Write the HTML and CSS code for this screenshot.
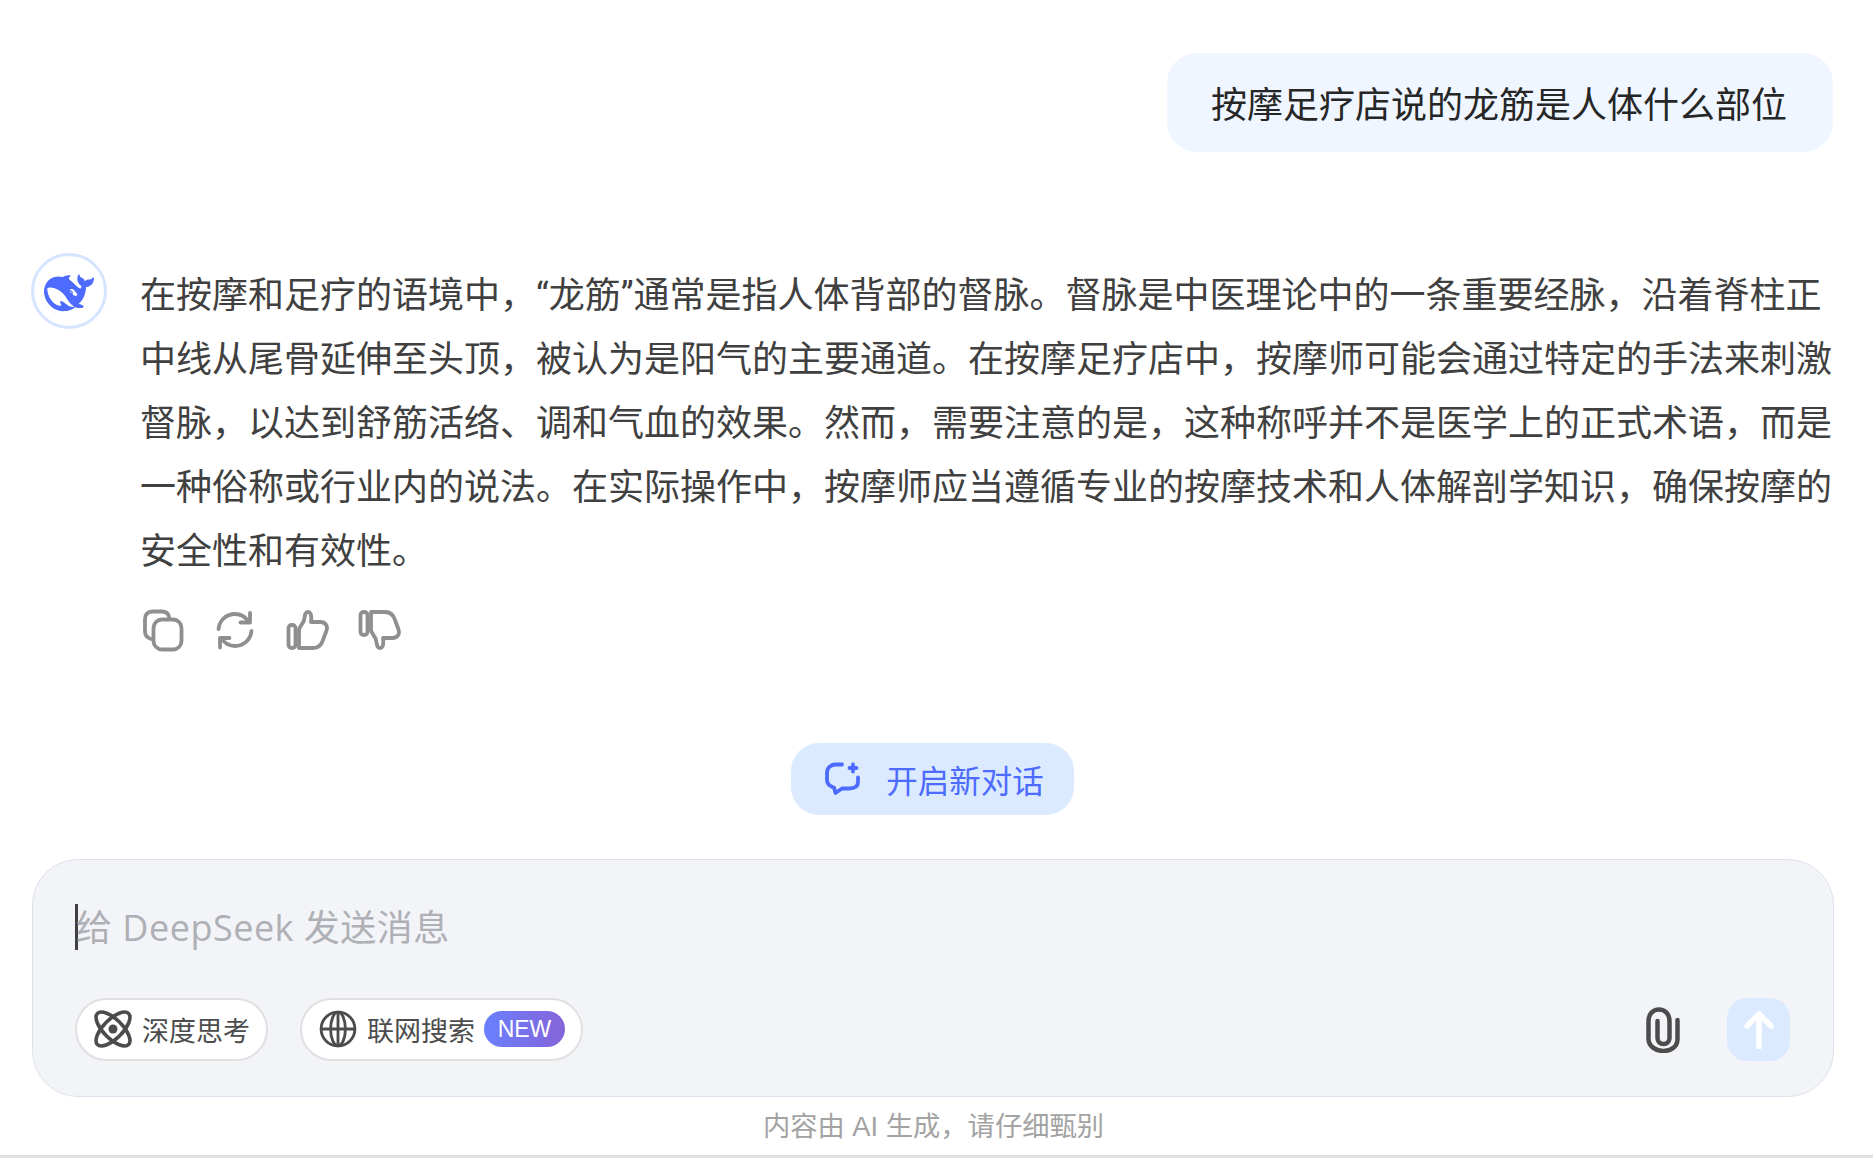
FILE: index.html
```html
<!DOCTYPE html>
<html lang="zh-CN">
<head>
<meta charset="utf-8">
<title>DeepSeek</title>
<link rel="stylesheet" href="styles.css">
</head>
<body>
<main class="page">
  <section class="chat">
    <div class="user-row">
      <div class="bubble">按摩足疗店说的龙筋是人体什么部位</div>
    </div>
    <div class="answer">
      <div class="avatar">
        <svg class="whale" viewBox="0 -1 24 24"><path fill="#4d6bfe" d="M23.748 4.482c-.254-.124-.364.113-.512.234-.051.039-.094.09-.137.136-.372.397-.806.657-1.373.626-.829-.046-1.537.214-2.163.848-.133-.782-.575-1.248-1.247-1.548-.352-.156-.708-.311-.955-.65-.172-.241-.219-.51-.305-.774-.055-.16-.11-.323-.293-.35-.2-.031-.278.136-.356.276-.313.572-.434 1.202-.422 1.84.027 1.436.633 2.58 1.838 3.393.137.093.172.187.129.323-.082.28-.18.552-.266.833-.055.179-.137.217-.329.14a5.526 5.526 0 01-1.736-1.18c-.857-.828-1.631-1.742-2.597-2.458a11.365 11.365 0 00-.689-.471c-.985-.957.13-1.743.388-1.836.27-.098.093-.432-.779-.428-.872.004-1.67.295-2.687.684a3.055 3.055 0 01-.465.137 9.597 9.597 0 00-2.883-.102c-1.885.21-3.39 1.102-4.497 2.623C.082 8.606-.231 10.684.152 12.85c.403 2.284 1.569 4.175 3.36 5.653 1.858 1.533 3.997 2.284 6.438 2.14 1.482-.085 3.133-.284 4.994-1.86.47.234.962.327 1.78.397.63.059 1.236-.03 1.705-.128.735-.156.684-.837.419-.961-2.155-1.004-1.682-.595-2.113-.926 1.096-1.296 2.746-2.642 3.392-7.003.05-.347.007-.565 0-.845-.004-.17.035-.237.23-.256a4.173 4.173 0 001.545-.475c1.396-.763 1.96-2.015 2.093-3.517.02-.23-.004-.467-.247-.588zM11.581 18c-2.089-1.642-3.102-2.183-3.52-2.16-.392.024-.321.471-.235.763.09.288.207.486.371.739.114.167.192.416-.113.603-.673.416-1.842-.14-1.897-.167-1.361-.802-2.5-1.86-3.301-3.307-.774-1.393-1.224-2.887-1.298-4.482-.02-.386.093-.522.477-.592a4.696 4.696 0 011.529-.039c2.132.312 3.946 1.265 5.468 2.774.868.86 1.525 1.887 2.202 2.891.72 1.066 1.494 2.082 2.48 2.914.348.292.625.514.891.677-.802.09-2.14.11-3.054-.614zm1-6.44a.306.306 0 01.415-.287.302.302 0 01.2.288.306.306 0 01-.31.307.303.303 0 01-.304-.308zm3.11 1.596c-.2.081-.399.151-.59.16a1.245 1.245 0 01-.798-.254c-.274-.23-.47-.358-.552-.758a1.73 1.73 0 01.016-.588c.07-.327-.008-.537-.239-.727-.187-.156-.426-.199-.688-.199a.559.559 0 01-.254-.078c-.11-.054-.2-.19-.114-.358.028-.054.16-.186.192-.21.356-.202.767-.136 1.146.016.352.144.618.408 1.001.782.391.451.462.576.685.914.176.265.336.537.445.848.067.195-.019.354-.25.452z"/></svg>
      </div>
      <div class="answer-body">
        <p class="answer-text">在按摩和足疗的语境中，“龙筋”通常是指人体背部的督脉。督脉是中医理论中的一条重要经脉，沿着脊柱正中线从尾骨延伸至头顶，被认为是阳气的主要通道。在按摩足疗店中，按摩师可能会通过特定的手法来刺激督脉，以达到舒筋活络、调和气血的效果。然而，需要注意的是，这种称呼并不是医学上的正式术语，而是一种俗称或行业内的说法。在实际操作中，按摩师应当遵循专业的按摩技术和人体解剖学知识，确保按摩的安全性和有效性。</p>
        <div class="actions">
          <svg class="act" viewBox="0 0 44 44"><path d="M10 31C6.500 30 4 27.500 4 23.500V11C4 6.500 6.500 3.500 11.500 3.500H21c3.600 0 6 1.700 7 5"/><rect x="12.500" y="11.500" width="28" height="30" rx="8.500"/></svg>
          <svg class="act" viewBox="0 0 44 44"><path d="M5.500 21C6.500 12 13.500 6 22 6c5.500 0 10 2.400 13 7"/><path d="M37 5v9.500h-9.500"/><path d="M38.500 23C37.500 32 30.500 38 22 38c-5.500 0-10-2.400-13-7"/><path d="M7 39.500V30h9.500"/></svg>
          <svg class="act" viewBox="0 0 44 44"><rect x="3.500" y="17" width="7" height="23" rx="3.200"/><path d="M14 21 18.500 13.500C19.500 11 19.500 8 20.500 5.500 21.500 3.500 24.500 3.500 25.500 5.500 26.500 8 26.500 11 26 14H35.500C40.500 14 43 18 41.500 22.500L38 32C36.500 37 33 40 28 40H14Z"/></svg>
          <svg class="act" viewBox="0 0 44 44"><g transform="matrix(1 0 0 -1 0 44)"><rect x="3.500" y="17" width="7" height="23" rx="3.200"/><path d="M14 21 18.500 13.500C19.500 11 19.500 8 20.500 5.500 21.500 3.500 24.500 3.500 25.500 5.500 26.500 8 26.500 11 26 14H35.500C40.500 14 43 18 41.500 22.500L38 32C36.500 37 33 40 28 40H14Z"/></g></svg>
        </div>
      </div>
    </div>
  </section>
  <div class="new-row">
    <button class="new-chat">
      <svg class="new-icon" viewBox="0 0 42 42"><path d="M20 6.500H14C8.500 6.500 5 10 5 15V22C5 26 7 28 12 29.500L13.500 35 20 30.500H27C33 30.500 36 28 36 24V19.500"/><path d="M31 6.500V13.500M27.500 10H34.500"/></svg>
      <span>开启新对话</span>
    </button>
  </div>
  <section class="composer">
    <div class="input-line"><span class="caret"></span><span class="placeholder">给 DeepSeek 发送消息</span></div>
    <div class="tools">
      <div class="tool-left">
        <div class="pill">
          <svg class="pill-icon" viewBox="0 0 38 38"><g fill="none" stroke="#4c4c4c" stroke-width="3.600"><ellipse cx="19" cy="19" rx="22" ry="9.500" transform="rotate(45 19 19)"/><ellipse cx="19" cy="19" rx="22" ry="9.500" transform="rotate(-45 19 19)"/></g><circle cx="19" cy="19" r="4.500" fill="#4c4c4c"/></svg>
          <span>深度思考</span>
        </div>
        <div class="pill">
          <svg class="pill-icon" viewBox="0 0 36 36"><g fill="none" stroke="#4c4c4c" stroke-width="2.700"><circle cx="18" cy="18" r="16"/><ellipse cx="18" cy="18" rx="7" ry="16"/><path d="M2 18h32"/><path d="M18 2v32"/></g></svg>
          <span>联网搜索</span>
          <span class="badge">NEW</span>
        </div>
      </div>
      <div class="tool-right">
        <svg class="clip" viewBox="0 0 34 46"><path d="M31.500 13v19c0 7.500-6 12-14 12S2.500 39 2.500 32V14C2.500 7 7 2.500 13 2.500S23.500 7 23.500 14v17c0 3.500-2.500 6-6 6s-6-2.500-6-6V14"/></svg>
        <div class="send">
          <svg class="send-icon" viewBox="0 0 32 38"><path d="M16 36V4M4 15 16 3l12 12"/></svg>
        </div>
      </div>
    </div>
  </section>
  <p class="notice">内容由 AI 生成，请仔细甄别</p>
</main>
</body>
</html>
```
FILE: styles.css
```css
html, body { margin: 0; padding: 0; background: #fff; }
body {
  width: 1873px;
  height: 1158px;
  overflow: hidden;
  font-family: "Liberation Sans", "Noto Sans CJK SC", sans-serif;
  color: #404040;
}
.page {
  box-sizing: border-box;
  height: 1158px;
  padding: 53px 38px 0 32px;
  border-bottom: 3px solid #e2e2e2;
  display: flex;
  flex-direction: column;
}
.user-row { display: flex; justify-content: flex-end; padding-right: 2px; }
.bubble {
  box-sizing: border-box;
  background: #eff6ff;
  border-radius: 30px;
  padding: 0 46px 2px 44px;
  height: 99px;
  display: flex;
  align-items: center;
  font-size: 36px;
  color: #262626;
}
.answer { display: flex; gap: 33px; margin: 101px 0 0 -1px; }
.avatar {
  box-sizing: border-box;
  width: 76px;
  height: 76px;
  flex: none;
  border: 3px solid #d6e4ff;
  border-radius: 50%;
  display: flex;
  align-items: center;
  justify-content: center;
}
.whale { width: 50px; height: 50px; flex: none; }
.answer-body { width: 1695px; margin-top: 11px; }
.answer-text {
  margin: 0;
  font-family: Roboto, "Noto Sans CJK SC", sans-serif;
  font-size: 36px;
  line-height: 64px;
  color: #404040;
}
.actions { display: flex; gap: 28px; margin-top: 24px; padding-left: 1px; }
.act {
  width: 44px;
  height: 44px;
  fill: none;
  stroke: #8f8f8f;
  stroke-width: 3.800;
  stroke-linecap: round;
  stroke-linejoin: round;
}
.new-row { display: flex; justify-content: center; margin-top: 91px; padding-right: 2px; }
.new-chat {
  width: 283px;
  height: 72px;
  border: 0;
  border-radius: 28px;
  background: #dbeafe;
  color: #4d6bfe;
  font: inherit;
  font-size: 31.500px;
  display: flex;
  align-items: center;
  justify-content: center;
  gap: 22px;
  padding: 0 0 0 1px;
}
.new-icon {
  width: 42px;
  height: 42px;
  fill: none;
  stroke: #4d6bfe;
  stroke-width: 3.800;
  stroke-linecap: round;
  stroke-linejoin: round;
}
.composer {
  box-sizing: border-box;
  height: 238px;
  margin: 44px 1px 0 0;
  background: #f3f4f8;
  border: 1.500px solid #dfe2ec;
  border-radius: 46px;
  padding: 44px 43px 35px 42px;
  display: flex;
  flex-direction: column;
  justify-content: space-between;
}
.input-line { display: flex; align-items: center; height: 46px; }
.caret { width: 3px; height: 46px; background: #404040; flex: none; }
.placeholder {
  font-family: "Open Sans", "Noto Sans CJK SC", sans-serif;
  font-size: 36px;
  letter-spacing: .5px;
  color: #afb0b6;
  margin: 0 0 4px -2px;
}
.tools { display: flex; justify-content: space-between; align-items: center; }
.tool-left { display: flex; gap: 32px; }
.pill {
  box-sizing: border-box;
  height: 63px;
  background: #fff;
  border: 2.500px solid #e0e0e0;
  border-radius: 32px;
  padding: 0 16px 1px 17px;
  display: flex;
  align-items: center;
  gap: 10px;
  font-size: 27px;
  color: #4c4c4c;
}
.pill-icon { width: 38px; height: 38px; flex: none; overflow: visible; }
.badge {
  width: 81px;
  height: 36px;
  margin-left: -1px;
  border-radius: 18px;
  background: linear-gradient(90deg, #6a80fd, #8563d8);
  color: #fff;
  font-size: 23px;
  display: flex;
  align-items: center;
  justify-content: center;
}
.tool-right { display: flex; align-items: center; gap: 47px; }
.clip {
  width: 34px;
  height: 46px;
  fill: none;
  stroke: #4c4c4c;
  stroke-width: 4.500;
  stroke-linecap: round;
}
.send {
  width: 63px;
  height: 63px;
  background: #dbeafe;
  border-radius: 20px;
  display: flex;
  align-items: center;
  justify-content: center;
}
.send-icon {
  width: 32px;
  height: 38px;
  fill: none;
  stroke: #fff;
  stroke-width: 5.500;
  stroke-linecap: round;
  stroke-linejoin: round;
}
.notice {
  margin: 14px 0 0;
  text-align: center;
  font-size: 27.300px;
  line-height: 32px;
  color: #a3a3a3;
}
```
